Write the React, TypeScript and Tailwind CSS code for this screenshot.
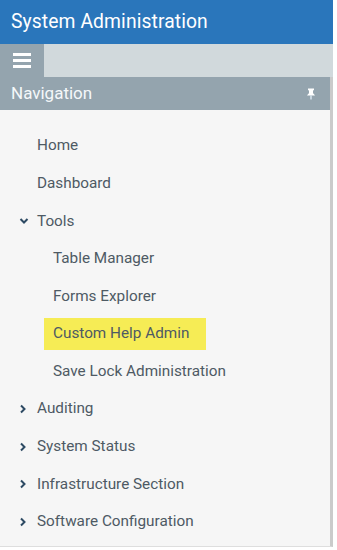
import React from "react";

const font = { fontFamily: "Roboto, 'Liberation Sans', sans-serif" };

function ChevronRight() {
  return (
    <svg width="8" height="10" viewBox="0 0 8 10" className="shrink-0">
      <path d="M2 1.5 L5.5 5 L2 8.5" fill="none" stroke="#2d4a63" strokeWidth="2" />
    </svg>
  );
}

function ChevronDown() {
  return (
    <svg width="10" height="8" viewBox="0 0 10 8" className="shrink-0">
      <path d="M1.5 2 L5 5.5 L8.5 2" fill="none" stroke="#2d4a63" strokeWidth="2" />
    </svg>
  );
}

function Pin() {
  return (
    <svg width="10" height="12" viewBox="0 0 10 12">
      <rect x="2" y="0.5" width="6" height="1.8" fill="#ffffff" />
      <rect x="3" y="2" width="4" height="4" fill="#ffffff" />
      <path d="M1 7.5 L2.5 5.5 L7.5 5.5 L9 7.5 Z" fill="#ffffff" />
      <rect x="4.4" y="7.5" width="1.2" height="4" fill="#e8f4ff" />
    </svg>
  );
}

type Item = { label: string; level: 0 | 1; chevron?: "down" | "right"; active?: boolean };

const items: Item[] = [
  { label: "Home", level: 0 },
  { label: "Dashboard", level: 0 },
  { label: "Tools", level: 0, chevron: "down" },
  { label: "Table Manager", level: 1 },
  { label: "Forms Explorer", level: 1 },
  { label: "Custom Help Admin", level: 1, active: true },
  { label: "Save Lock Administration", level: 1 },
  { label: "Auditing", level: 0, chevron: "right" },
  { label: "System Status", level: 0, chevron: "right" },
  { label: "Infrastructure Section", level: 0, chevron: "right" },
  { label: "Software Configuration", level: 0, chevron: "right" },
];

export default function App() {
  return (
    <div className="w-[337px] h-[550px] bg-white overflow-hidden" style={font}>
      <div className="w-[333px] h-[44px] bg-[#2a76bb] flex items-center pl-[11px]">
        <span className="text-white text-[19.3px] leading-none tracking-[0.1px]">System Administration</span>
      </div>
      <div className="w-[333px] h-[33px] bg-[#d1d9dc] flex">
        <div className="w-[44px] h-full bg-[#94a4ae] flex flex-col justify-center items-start pl-[13px] gap-[3px]">
          <div className="w-[18px] h-[3px] bg-white" />
          <div className="w-[18px] h-[3px] bg-white" />
          <div className="w-[18px] h-[3px] bg-white" />
        </div>
      </div>
      <div className="w-[333px] h-[470px] border-r-[3px] border-b border-r-[#cbcbcb] border-b-[#dedede] bg-[#f6f6f6] flex flex-col">
        <div className="h-[33px] bg-[#94a4ae] flex items-center justify-between pl-[11px] pr-[14px]">
          <span className="text-[#f4f8fa] text-[17px] leading-none">Navigation</span>
          <Pin />
        </div>
        <div className="flex flex-col pt-[17px]">
          {items.map((it) => (
            <div key={it.label} className="h-[37.6px] flex items-center">
              {it.level === 0 ? (
                <div className="flex items-center">
                  <div className="w-[37px] flex justify-start pl-[19px]">
                    {it.chevron === "down" ? <ChevronDown /> : it.chevron === "right" ? <ChevronRight /> : null}
                  </div>
                  <span className="text-[15.3px] text-[#4e5a64]">{it.label}</span>
                </div>
              ) : (
                <div className="pl-[44px] flex items-center">
                  <span
                    className={
                      "text-[15.3px] text-[#4e5a64] h-[32px] flex items-center pl-[9px] " +
                      (it.active ? "bg-[#f6ec55] w-[162px]" : "")
                    }
                  >
                    {it.label}
                  </span>
                </div>
              )}
            </div>
          ))}
        </div>
      </div>
    </div>
  );
}
